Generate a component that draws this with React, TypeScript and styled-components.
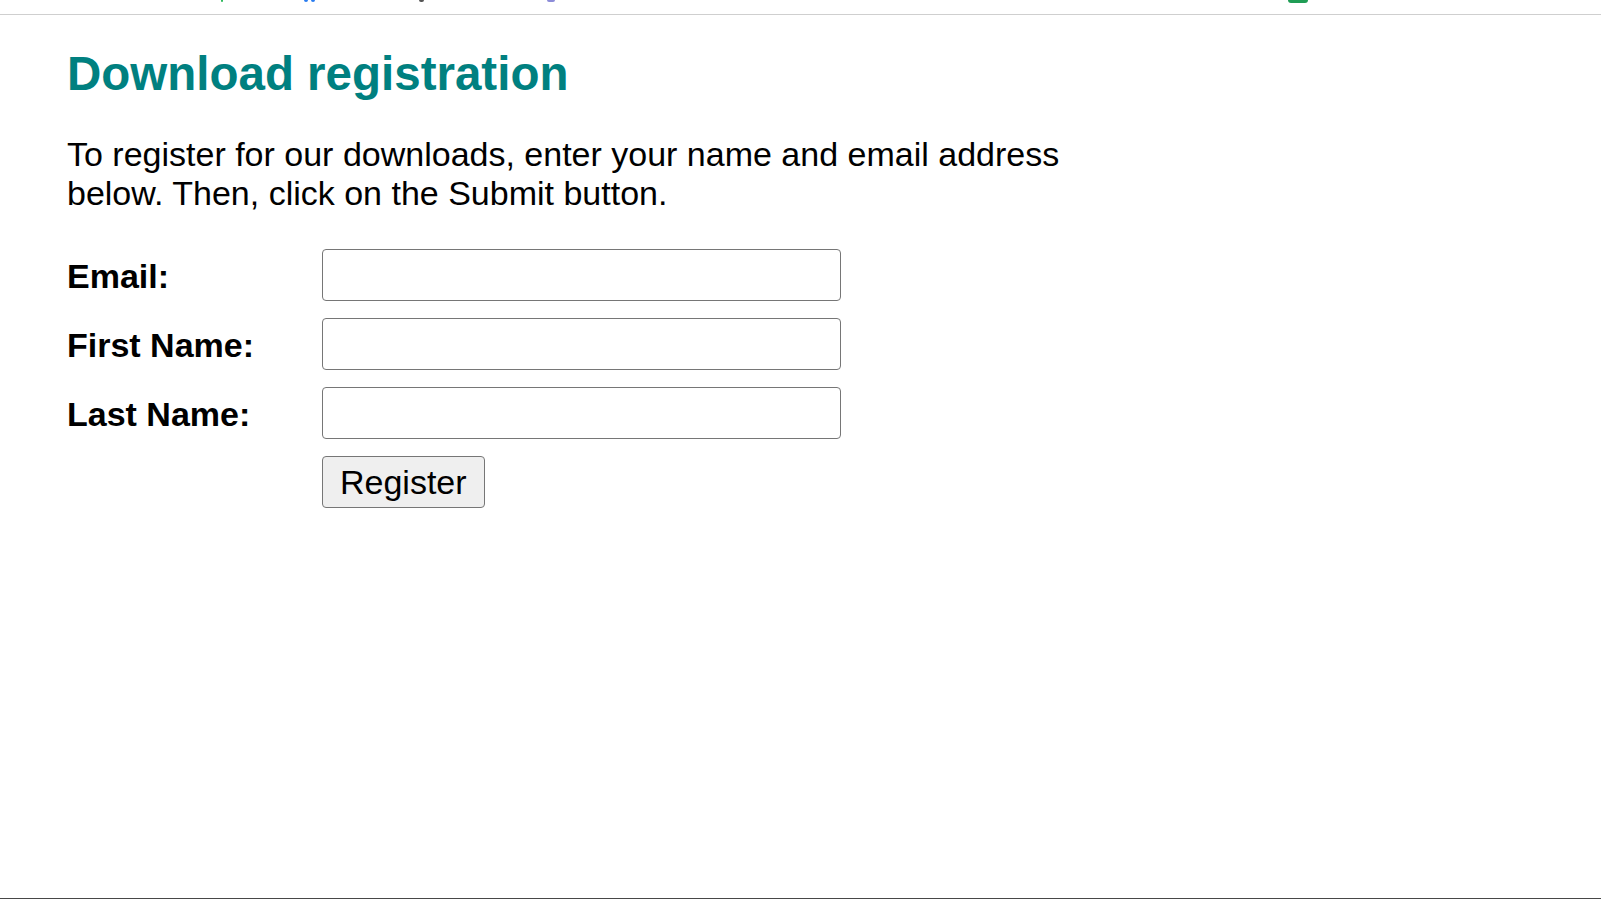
import React from "react";
import styled, { createGlobalStyle } from "styled-components";

const GlobalStyle = createGlobalStyle`
  html, body {
    margin: 0;
    padding: 0;
    background: #ffffff;
  }
  body {
    font-family: "Liberation Sans", Arial, sans-serif;
    color: #000000;
  }
`;

const Page = styled.div`
  height: 100vh;
  display: flex;
  flex-direction: column;
  overflow: hidden;
`;

const TopStrip = styled.div`
  height: 14px;
  flex: none;
  border-bottom: 1px solid #cfcfcf;
  display: flex;
  align-items: flex-start;
`;

const Clip = styled.span<{ $gap: number; $w: number; $color: string; $h?: number }>`
  display: block;
  margin-left: ${(p) => p.$gap}px;
  width: ${(p) => p.$w}px;
  height: ${(p) => p.$h ?? 2}px;
  background: ${(p) => p.$color};
  border-radius: 0 0 3px 3px;
`;

const Main = styled.main`
  flex: 1;
  padding: 31px 0 0 67px;
`;

const Title = styled.h1`
  margin: 0 0 34px;
  font-size: 47.5px;
  font-weight: bold;
  line-height: normal;
  color: #008080;
`;

const Intro = styled.p`
  margin: 0 0 36px;
  font-size: 34px;
  line-height: normal;
  max-width: 1050px;
`;

const Form = styled.form`
  display: grid;
  grid-template-columns: 255px 519px;
  row-gap: 17px;
  align-items: center;
`;

const Label = styled.label`
  font-size: 34px;
  font-weight: bold;
  line-height: normal;
  padding-top: 2px;
`;

const Field = styled.input`
  box-sizing: border-box;
  width: 519px;
  height: 52px;
  margin: 0;
  padding: 5px 8px;
  border: 1px solid #767676;
  border-radius: 4px;
  background: #ffffff;
  font-family: "Liberation Sans", Arial, sans-serif;
  font-size: 34px;
`;

const Button = styled.button`
  grid-column: 2;
  justify-self: start;
  box-sizing: border-box;
  height: 52px;
  padding: 0 17px;
  margin: 0;
  border: 1px solid #767676;
  border-radius: 4px;
  background: #efefef;
  color: #000000;
  font-family: "Liberation Sans", Arial, sans-serif;
  font-size: 34px;
  line-height: normal;
`;

const BottomEdge = styled.div`
  flex: none;
  height: 1px;
  background: #474747;
`;

export default function App() {
  return (
    <>
      <GlobalStyle />
      <Page>
        <TopStrip>
          <Clip $gap={221} $w={2} $color="#2eb85c" />
          <Clip $gap={81} $w={4} $color="#2a7cf0" />
          <Clip $gap={3} $w={4} $color="#2a7cf0" />
          <Clip $gap={104} $w={5} $color="#555555" />
          <Clip $gap={123} $w={8} $color="#8c8cd8" />
          <Clip $gap={733} $w={20} $color="#1f9d55" $h={3} />
        </TopStrip>
        <Main>
          <Title>Download registration</Title>
          <Intro>
            To register for our downloads, enter your name and email address below. Then, click on the
            Submit button.
          </Intro>
          <Form onSubmit={(e) => e.preventDefault()}>
            <Label htmlFor="email">Email:</Label>
            <Field id="email" type="text" />
            <Label htmlFor="first">First Name:</Label>
            <Field id="first" type="text" />
            <Label htmlFor="last">Last Name:</Label>
            <Field id="last" type="text" />
            <Button type="submit">Register</Button>
          </Form>
        </Main>
        <BottomEdge />
      </Page>
    </>
  );
}
